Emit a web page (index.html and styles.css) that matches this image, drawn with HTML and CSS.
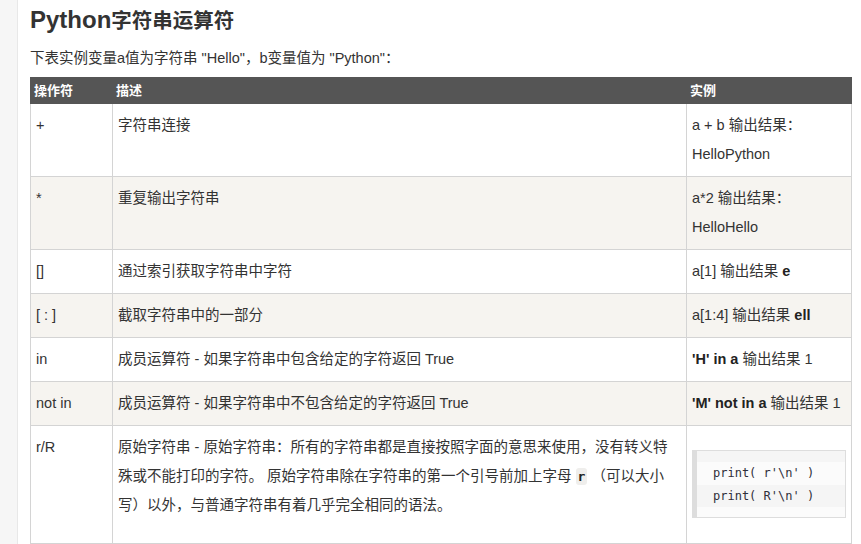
FILE: index.html
```html
<!DOCTYPE html>
<html lang="zh-CN">
<head>
<meta charset="utf-8">
<title>Python字符串运算符</title>
<link rel="stylesheet" href="styles.css">
</head>
<body>
<div class="page">
  <aside class="sidebar"></aside>
  <main class="content">
    <h2 class="title">Python<span class="title-cjk">字符串运算符</span></h2>
    <p class="intro">下表实例变量a值为字符串 "Hello"，b变量值为 "Python"：</p>
    <table class="reference">
      <colgroup><col class="c1"><col class="c2"><col class="c3"></colgroup>
      <thead>
        <tr><th>操作符</th><th>描述</th><th>实例</th></tr>
      </thead>
      <tbody>
        <tr><td>+</td><td>字符串连接</td><td>a + b 输出结果：<br>HelloPython</td></tr>
        <tr><td>*</td><td>重复输出字符串</td><td>a*2 输出结果：<br>HelloHello</td></tr>
        <tr><td>[]</td><td>通过索引获取字符串中字符</td><td>a[1] 输出结果 <b>e</b></td></tr>
        <tr><td>[ : ]</td><td>截取字符串中的一部分</td><td>a[1:4] 输出结果 <b>ell</b></td></tr>
        <tr><td>in</td><td>成员运算符 - 如果字符串中包含给定的字符返回 True</td><td><b>'H' in a</b> 输出结果 1</td></tr>
        <tr><td>not in</td><td>成员运算符 - 如果字符串中不包含给定的字符返回 True</td><td><b>'M' not in a</b> 输出结果 1</td></tr>
        <tr>
          <td>r/R</td>
          <td>原始字符串 - 原始字符串：所有的字符串都是直接按照字面的意思来使用，没有转义特殊或不能打印的字符。 原始字符串除在字符串的第一个引号前加上字母 <code class="inline">r</code> （可以大小写）以外，与普通字符串有着几乎完全相同的语法。</td>
          <td>
            <pre class="codeblock"><span class="line pad-top"></span><span class="line odd">print( r'\n' )</span><span class="line even">print( R'\n' )</span><span class="line pad-bottom"></span></pre>
          </td>
        </tr>
      </tbody>
    </table>
  </main>
</div>
</body>
</html>
```

FILE: styles.css
```css
html, body {
  margin: 0;
  padding: 0;
  background: #fff;
}

body {
  font-family: "Liberation Sans", "Noto Sans CJK SC", sans-serif;
  color: #333;
}

.page {
  display: flex;
  min-height: 544px;
}

.sidebar {
  width: 17px;
  flex: 0 0 17px;
  background: #f6f6f6;
  border-right: 1px solid #e8e8e8;
}

.content {
  padding-left: 12px;
}

.title {
  margin: 0;
  padding-top: 7px;
  height: 27px;
  font-size: 24px;
  line-height: 26px;
  font-weight: bold;
  color: #333;
}

.title-cjk {
  font-size: 20.5px;
}

.intro {
  margin: 10px 0 5px;
  font-size: 14.5px;
  line-height: 28px;
  color: #333;
}

.reference {
  border-collapse: collapse;
  table-layout: fixed;
  width: 821px;
}

.reference .c1 { width: 82px; }
.reference .c2 { width: 574px; }
.reference .c3 { width: 165px; }

.reference th {
  background: #555;
  color: #fff;
  border: 1px solid #555;
  font-size: 13px;
  font-weight: bold;
  line-height: 19px;
  padding: 3px;
  text-align: left;
  vertical-align: top;
}

.reference td {
  border: 1px solid #d4d4d4;
  padding: 7px 5px;
  font-size: 14.5px;
  line-height: 29px;
  vertical-align: top;
  color: #333;
}

.reference tbody tr:nth-child(odd) { background: #fff; }
.reference tbody tr:nth-child(even) { background: #f6f4f0; }

.reference b {
  color: #222;
}

.inline {
  font-family: "DejaVu Sans Mono", monospace;
  font-weight: bold;
  font-size: 13px;
  line-height: 1;
  background: #efeeec;
  border-radius: 3px;
  padding: 1px 2px;
  color: #222;
}

.codeblock {
  margin: 17px 0 18px;
  padding: 0;
  background: #fbfbfb;
  border: 1px solid #ddd;
  border-left: 5px solid #ddd;
  font-family: "DejaVu Sans Mono", monospace;
  font-size: 12px;
  color: #2f2f3a;
  white-space: pre;
}

.codeblock .line {
  display: block;
  padding-left: 16px;
}

.codeblock .pad-top { height: 11px; background: #f5f5f5; }
.codeblock .odd { line-height: 23px; background: #fbfbfb; }
.codeblock .even { line-height: 22px; background: #f5f5f5; }
.codeblock .pad-bottom { height: 10px; background: #fbfbfb; }
```
